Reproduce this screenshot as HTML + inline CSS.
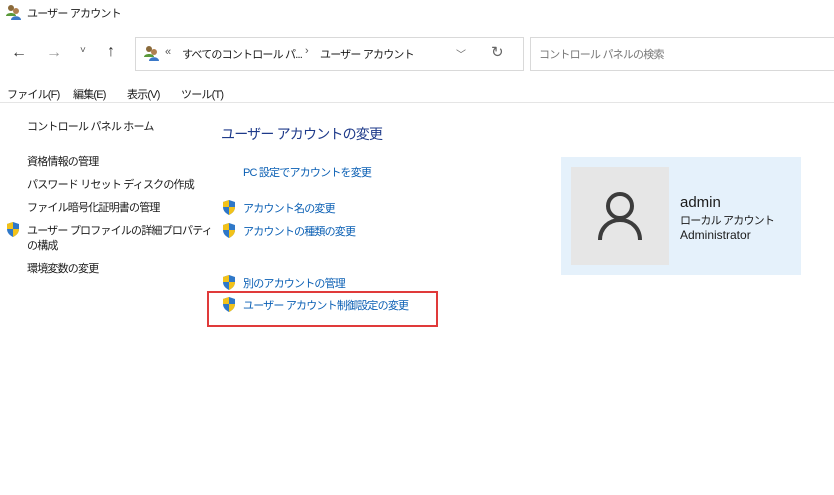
<!DOCTYPE html>
<html><head><meta charset="utf-8"><style>
body{margin:0;width:834px;height:495px;background:#fff;position:relative;overflow:hidden;font-family:"Liberation Sans","Noto Sans CJK JP",sans-serif;font-size:11px;letter-spacing:-0.8px;color:#1a1a1a}
.a{position:absolute;white-space:nowrap}
.l{color:#0a5fb4}
.sh{position:absolute;width:14px;height:15px}
</style></head><body>
<svg class="a" style="left:5px;top:4px" width="18" height="16" viewBox="0 0 18 16"><circle cx="6" cy="4" r="3" fill="#8a6a3a"/><path d="M1 12c0-4 10-4 10 0z" fill="#5a9a3a"/><circle cx="11" cy="7" r="3" fill="#b08050"/><path d="M6 16c0-5 10-5 10 0z" fill="#3a78c8"/></svg>
<div class="a" style="left:27px;top:5px">ユーザー アカウント</div>
<div class="a" style="left:11px;top:44px;font-size:16px;color:#333">←</div>
<div class="a" style="left:46px;top:44px;font-size:16px;color:#999">→</div>
<div class="a" style="left:80px;top:45px;font-size:10px;color:#555">˅</div>
<div class="a" style="left:107px;top:43px;font-size:16px;color:#333">↑</div>
<div class="a" style="left:135px;top:37px;width:387px;height:32px;border:1px solid #d9d9d9"></div>
<svg class="a" style="left:143px;top:45px" width="18" height="16" viewBox="0 0 18 16"><circle cx="6" cy="4" r="3" fill="#8a6a3a"/><path d="M1 12c0-4 10-4 10 0z" fill="#5a9a3a"/><circle cx="11" cy="7" r="3" fill="#b08050"/><path d="M6 16c0-5 10-5 10 0z" fill="#3a78c8"/></svg>
<div class="a" style="left:165px;top:46px;color:#555">«</div>
<div class="a" style="left:182px;top:46px">すべてのコントロール パ...</div>
<div class="a" style="left:305px;top:45px;color:#555">›</div>
<div class="a" style="left:320px;top:46px">ユーザー アカウント</div>
<div class="a" style="left:456px;top:46px;font-size:10px;color:#666">﹀</div>
<div class="a" style="left:491px;top:43px;font-size:15px;color:#666">↻</div>
<div class="a" style="left:530px;top:37px;width:310px;height:32px;border:1px solid #d9d9d9"></div>
<div class="a" style="left:539px;top:46px;color:#777">コントロール パネルの検索</div>
<div class="a" style="left:7px;top:86px">ファイル(F)</div>
<div class="a" style="left:73px;top:86px">編集(E)</div>
<div class="a" style="left:127px;top:86px">表示(V)</div>
<div class="a" style="left:181px;top:86px">ツール(T)</div>
<div class="a" style="left:0;top:102px;width:834px;height:1px;background:#e5e5e5"></div>
<div class="a" style="left:27px;top:118px">コントロール パネル ホーム</div>
<div class="a" style="left:27px;top:153px">資格情報の管理</div>
<div class="a" style="left:27px;top:176px">パスワード リセット ディスクの作成</div>
<div class="a" style="left:27px;top:199px">ファイル暗号化証明書の管理</div>
<div class="a" style="left:27px;top:222px">ユーザー プロファイルの詳細プロパティ</div>
<div class="a" style="left:27px;top:237px">の構成</div>
<div class="a" style="left:27px;top:260px">環境変数の変更</div>
<div class="a" style="left:221px;top:124px;font-size:14px;color:#1e3a8a">ユーザー アカウントの変更</div>
<div class="a l" style="left:243px;top:164px">PC 設定でアカウントを変更</div>
<div class="a l" style="left:243px;top:200px">アカウント名の変更</div>
<div class="a l" style="left:243px;top:223px">アカウントの種類の変更</div>
<div class="a l" style="left:243px;top:275px">別のアカウントの管理</div>
<div class="a l" style="left:243px;top:297px">ユーザー アカウント制御設定の変更</div>
<svg width="0" height="0" style="position:absolute"><defs><symbol id="s" viewBox="0 0 14 15"><path d="M7 0L13 2V7C13 11 10 13.5 7 15 4 13.5 1 11 1 7V2Z" fill="#2f78c8"/><path d="M7 0V7H1V2Z" fill="#f2c21a"/><path d="M7 7H13C13 11 10 13.5 7 15Z" fill="#f2c21a"/></symbol></defs></svg>
<svg class="sh" style="left:6px;top:222px"><use href="#s"/></svg>
<svg class="sh" style="left:222px;top:200px"><use href="#s"/></svg>
<svg class="sh" style="left:222px;top:223px"><use href="#s"/></svg>
<svg class="sh" style="left:222px;top:275px"><use href="#s"/></svg>
<svg class="sh" style="left:222px;top:297px"><use href="#s"/></svg>
<div class="a" style="left:207px;top:291px;width:227px;height:32px;border:2px solid #e03a3a"></div>
<div class="a" style="left:561px;top:157px;width:240px;height:118px;background:#e5f1fb"></div>
<div class="a" style="left:571px;top:167px;width:98px;height:98px;background:#e6e6e6"></div>
<svg class="a" style="left:596px;top:190px" width="48" height="52" viewBox="0 0 48 52"><circle cx="24" cy="16" r="12" fill="none" stroke="#3c3c3c" stroke-width="4"/><path d="M4 50C4 38 13 30 24 30S44 38 44 50" fill="none" stroke="#3c3c3c" stroke-width="4"/></svg>
<div class="a" style="left:680px;top:194px;font-size:15px;letter-spacing:0">admin</div>
<div class="a" style="left:680px;top:212px">ローカル アカウント</div>
<div class="a" style="left:680px;top:228px;font-size:12px;letter-spacing:0">Administrator</div>
</body></html>
